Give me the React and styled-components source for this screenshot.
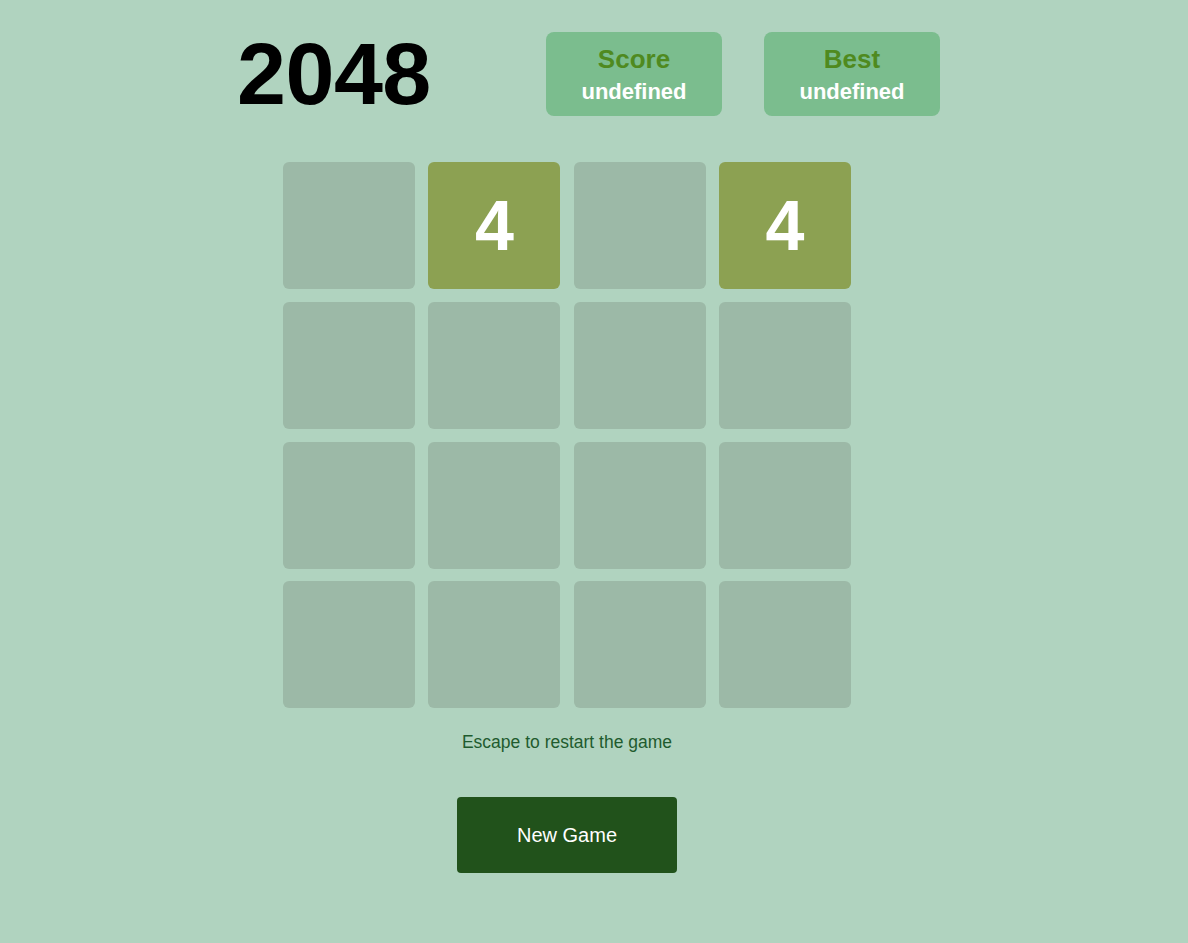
import React from "react";
import styled, { createGlobalStyle } from "styled-components";

const board = [
  [0, 4, 0, 4],
  [0, 0, 0, 0],
  [0, 0, 0, 0],
  [0, 0, 0, 0],
];

const GlobalStyle = createGlobalStyle`
  html, body {
    margin: 0;
    padding: 0;
    background: #b0d3bf;
    font-family: "Liberation Sans", Arial, sans-serif;
  }
`;

export default function App() {
  return (
    <Page>
      <GlobalStyle />
      <Header>
        <Title>2048</Title>
        <ScoreBox>
          <Label>Score</Label>
          <Value>undefined</Value>
        </ScoreBox>
        <ScoreBox>
          <Label>Best</Label>
          <Value>undefined</Value>
        </ScoreBox>
      </Header>
      <Grid>
        {board.flat().map((v, i) => (
          <Tile key={i} filled={v > 0}>
            {v > 0 ? v : ""}
          </Tile>
        ))}
      </Grid>
      <Hint>Escape to restart the game</Hint>
      <Button>New Game</Button>
    </Page>
  );
}

const Page = styled.div`
  display: flex;
  flex-direction: column;
  align-items: center;
  width: 1134px;
  min-height: 943px;
`;

const Header = styled.div`
  display: flex;
  align-items: flex-start;
  padding: 32px 0 0 43px;
  height: 130px;
  box-sizing: border-box;
`;

const Title = styled.h1`
  margin: 0 116px 0 0;
  width: 193px;
  font-size: 88px;
  line-height: 84px;
  font-weight: bold;
  color: #000;
  letter-spacing: -0.5px;
`;

const ScoreBox = styled.div`
  display: flex;
  flex-direction: column;
  align-items: center;
  justify-content: center;
  width: 176px;
  height: 84px;
  margin-right: 42px;
  border-radius: 8px;
  background: #7bbd8e;
  &:last-child {
    margin-right: 0;
  }
`;

const Label = styled.div`
  font-size: 26px;
  font-weight: bold;
  color: #4f8a1f;
  line-height: 32px;
  margin-bottom: 3px;
`;

const Value = styled.div`
  font-size: 22px;
  font-weight: bold;
  color: #fff;
  line-height: 28px;
`;

const Grid = styled.div`
  display: grid;
  grid-template-columns: repeat(4, 132px);
  grid-auto-rows: 127px;
  column-gap: 13.3px;
  row-gap: 12.8px;
  margin-top: 32px;
`;

const Tile = styled.div`
  display: flex;
  align-items: center;
  justify-content: center;
  border-radius: 6px;
  background: ${(p) => (p.filled ? "#8ca152" : "#9cb9a7")};
  color: #fff;
  font-size: 70px;
  font-weight: bold;
`;

const Hint = styled.p`
  margin: 24px 0 0;
  font-size: 17.5px;
  line-height: 20px;
  color: #1f5b2e;
`;

const Button = styled.button`
  margin-top: 45px;
  width: 220px;
  height: 76px;
  border: none;
  border-radius: 4px;
  background: #21521b;
  color: #fff;
  font-family: "Liberation Sans", Arial, sans-serif;
  font-size: 20px;
`;
